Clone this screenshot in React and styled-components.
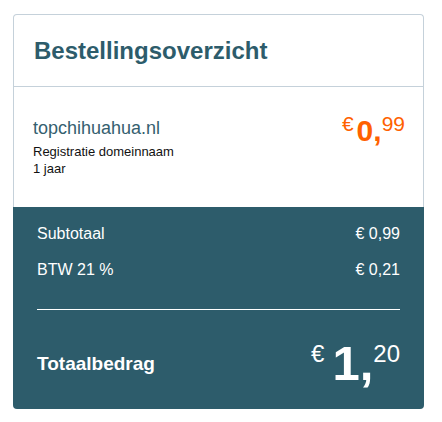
import React from 'react';
import styled, { createGlobalStyle } from 'styled-components';

const GlobalStyle = createGlobalStyle`
  body {
    margin: 0;
    background: #fff;
    font-family: "Liberation Sans", Arial, sans-serif;
  }
`;

const Card = styled.div`
  width: 411px;
  margin: 14px 0 0 13px;
`;

const Top = styled.div`
  border: 1px solid #c5d1da;
  border-bottom: none;
  border-radius: 4px 4px 0 0;
`;

const Header = styled.div`
  padding: 22px 20px 21px;
  border-bottom: 1px solid #c5d1da;
`;

const Title = styled.h2`
  margin: 0;
  font-size: 24px;
  line-height: 28px;
  font-weight: bold;
  color: #2d5c6b;
`;

const Item = styled.div`
  display: flex;
  justify-content: space-between;
  align-items: flex-start;
  padding: 30px 18px 30px 19px;
`;

const Domain = styled.div`
  font-size: 18px;
  line-height: 22px;
  color: #35606f;
  margin-bottom: 4px;
`;

const Detail = styled.div`
  font-size: 13px;
  line-height: 17px;
  color: #111;
`;

const Price = styled.div`
  display: flex;
  align-items: flex-start;
  color: ${p => p.$color};
`;

const Small = styled.span`
  font-size: ${p => p.$size}px;
  line-height: ${p => p.$size}px;
  margin-top: ${p => p.$top}px;
  margin-right: ${p => p.$gap || 0}px;
`;

const Big = styled.span`
  font-size: ${p => p.$size}px;
  line-height: ${p => p.$size}px;
  font-weight: bold;
  margin-top: ${p => p.$top}px;
`;

const Summary = styled.div`
  background: #2d5c6b;
  border-radius: 0 0 4px 4px;
  padding: 17px 24px 21px;
  color: #fff;
`;

const Row = styled.div`
  display: flex;
  justify-content: space-between;
  font-size: 16px;
  line-height: 20px;
  margin-bottom: 16px;
  &:last-of-type {
    margin-bottom: 0;
  }
`;

const Divider = styled.hr`
  border: none;
  border-top: 1px solid #fff;
  margin: 29px 0 29px;
`;

const TotalRow = styled.div`
  display: flex;
  justify-content: space-between;
  align-items: center;
`;

const TotalLabel = styled.span`
  font-size: 19px;
  font-weight: bold;
`;

export default function App() {
  return (
    <>
      <GlobalStyle />
      <Card>
        <Top>
          <Header>
            <Title>Bestellingsoverzicht</Title>
          </Header>
          <Item>
            <div>
              <Domain>topchihuahua.nl</Domain>
              <Detail>Registratie domeinnaam</Detail>
              <Detail>1 jaar</Detail>
            </div>
            <Price $color="#ff6100">
              <Small $size={21} $top={-4} $gap={3}>€</Small>
              <Big $size={30} $top={-1}>0,</Big>
              <Small $size={21} $top={-4}>99</Small>
            </Price>
          </Item>
        </Top>
        <Summary>
          <div>
            <Row><span>Subtotaal</span><span>€ 0,99</span></Row>
            <Row><span>BTW 21 %</span><span>€ 0,21</span></Row>
          </div>
          <Divider />
          <TotalRow>
            <TotalLabel>Totaalbedrag</TotalLabel>
            <Price $color="#fff">
              <Small $size={24} $top={3} $gap={8}>€</Small>
              <Big $size={49} $top={0}>1,</Big>
              <Small $size={24} $top={3}>20</Small>
            </Price>
          </TotalRow>
        </Summary>
      </Card>
    </>
  );
}
